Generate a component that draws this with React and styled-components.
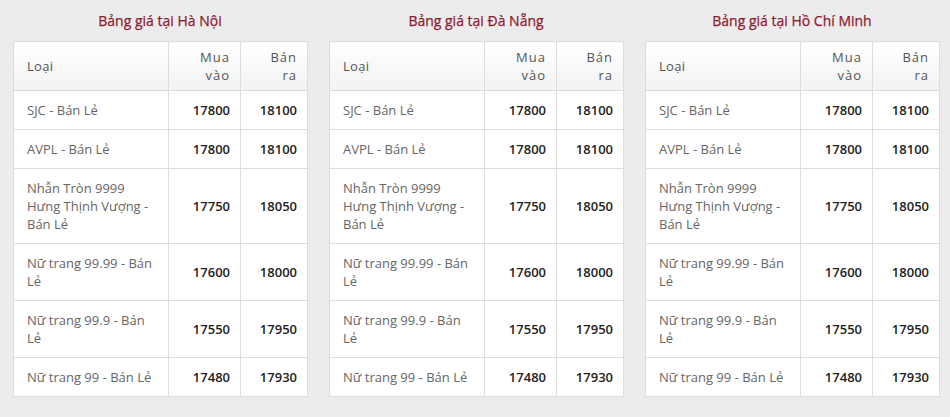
import React from 'react'
import styled, { createGlobalStyle } from 'styled-components'

const GlobalStyle = createGlobalStyle`
  html, body {
    margin: 0;
    padding: 0;
    background: #ececec;
    font-family: "Open Sans", "Liberation Sans", sans-serif;
  }
`

const rows = [
  { name: 'SJC - Bán Lẻ', buy: 17800, sell: 18100 },
  { name: 'AVPL - Bán Lẻ', buy: 17800, sell: 18100 },
  { name: 'Nhẫn Tròn 9999 Hưng Thịnh Vượng - Bán Lẻ', buy: 17750, sell: 18050 },
  { name: 'Nữ trang 99.99 - Bán Lẻ', buy: 17600, sell: 18000 },
  { name: 'Nữ trang 99.9 - Bán Lẻ', buy: 17550, sell: 17950 },
  { name: 'Nữ trang 99 - Bán Lẻ', buy: 17480, sell: 17930 },
]

const cities = ['Hà Nội', 'Đà Nẵng', 'Hồ Chí Minh']

function PriceTable({ city }) {
  return (
    <Column>
      <Title>Bảng giá tại {city}</Title>
      <Table>
        <colgroup>
          <col style={{ width: 155 }} />
          <col style={{ width: 72 }} />
          <col style={{ width: 67 }} />
        </colgroup>
        <thead>
          <tr>
            <Th>Loại</Th>
            <Th right>Mua vào</Th>
            <Th right>Bán ra</Th>
          </tr>
        </thead>
        <tbody>
          {rows.map((r) => (
            <tr key={r.name}>
              <Td>{r.name}</Td>
              <Td right bold>{r.buy}</Td>
              <Td right bold>{r.sell}</Td>
            </tr>
          ))}
        </tbody>
      </Table>
    </Column>
  )
}

export default function App() {
  return (
    <>
      <GlobalStyle />
      <Page>
        {cities.map((c) => (
          <PriceTable key={c} city={c} />
        ))}
      </Page>
    </>
  )
}

const Page = styled.div`
  display: grid;
  grid-template-columns: repeat(3, 294px);
  gap: 22px;
  padding: 0 12px 0 13px;
  width: 950px;
  box-sizing: border-box;
`

const Column = styled.div`
  display: flex;
  flex-direction: column;
`

const Title = styled.div`
  height: 41px;
  line-height: 42px;
  text-align: center;
  color: #8e1b2e;
  font-size: 14px;
  font-weight: 400;
  -webkit-text-stroke: 0.25px #8e1b2e;
`

const Table = styled.table`
  width: 294px;
  table-layout: fixed;
  border-collapse: collapse;
  background: #fff;
  font-size: 13px;
  line-height: 18px;
`

const Th = styled.th`
  border: 1px solid #dcdcdc;
  padding: 6px 10px 6px 13px;
  text-align: ${(p) => (p.right ? 'right' : 'left')};
  font-weight: 400;
  letter-spacing: ${(p) => (p.right ? '1px' : '0.3px')};
  color: #555;
  background: linear-gradient(#ffffff, #f2f2f2);
  vertical-align: middle;
`

const Td = styled.td`
  border: 1px solid #dcdcdc;
  padding: 10px 10px 10px 13px;
  text-align: ${(p) => (p.right ? 'right' : 'left')};
  font-weight: ${(p) => (p.bold ? 600 : 400)};
  color: ${(p) => (p.bold ? '#222' : '#666')};
  vertical-align: middle;
`
